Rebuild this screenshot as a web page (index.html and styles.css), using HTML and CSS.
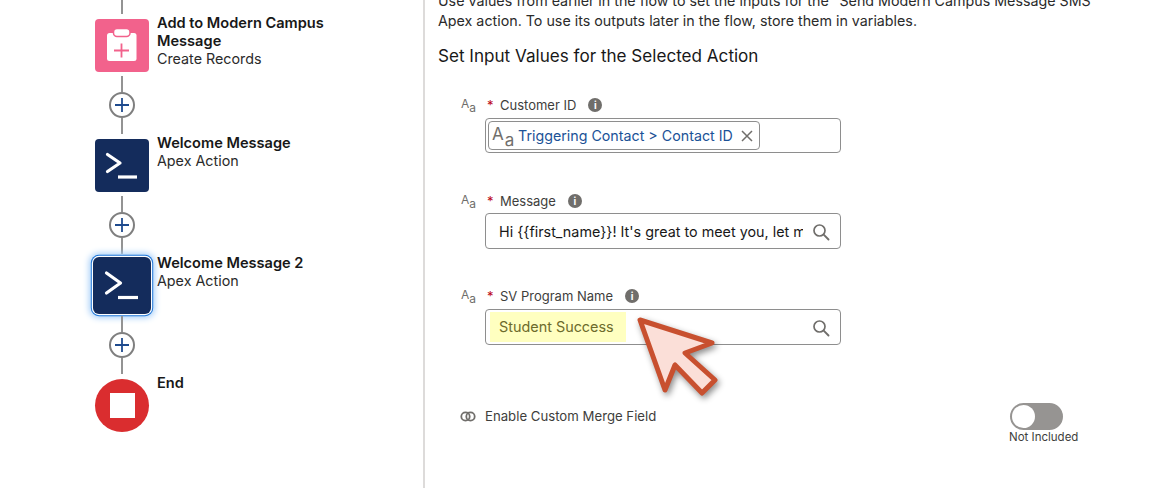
FILE: index.html
```html
<!DOCTYPE html>
<html lang="en">
<head>
<meta charset="utf-8">
<title>Flow Builder</title>
<link rel="stylesheet" href="styles.css">
</head>
<body>
<div class="app">
  <section class="canvas">
    <div class="flow">
      <div class="line line-top"></div>
      <div class="node">
        <div class="icon pink">
          <svg width="54" height="54" viewBox="0 0 54 54"><rect x="12" y="14" width="29.500" height="28" rx="2.500" fill="#fff"/><rect x="18.500" y="9.500" width="16.500" height="8" rx="3.500" fill="#fff" stroke="#f2628c" stroke-width="1.500"/><path stroke="#f2628c" stroke-width="1.800" fill="none" d="M26.500 24.500v14M19 31.500h15"/></svg>
        </div>
        <div class="info"><b>Add to Modern Campus Message</b><span>Create Records</span></div>
      </div>
      <div class="connector">
        <div class="line"></div>
        <div class="plus"><svg width="14" height="14" viewBox="0 0 14 14"><path stroke="#1f4b8e" stroke-width="1.800" d="M7 0v14M0 7h14"/></svg></div>
        <div class="line"></div>
      </div>
      <div class="node">
        <div class="icon navy">
          <svg width="54" height="54" viewBox="0 0 54 54"><path fill="none" stroke="#fff" stroke-width="3.200" stroke-linecap="round" stroke-linejoin="round" d="M12.500 15.500 L25 24 L12.500 32.500"/><path stroke="#fff" stroke-width="3.200" d="M23 38h19"/></svg>
        </div>
        <div class="info"><b>Welcome Message</b><span>Apex Action</span></div>
      </div>
      <div class="connector">
        <div class="line"></div>
        <div class="plus"><svg width="14" height="14" viewBox="0 0 14 14"><path stroke="#1f4b8e" stroke-width="1.800" d="M7 0v14M0 7h14"/></svg></div>
        <div class="line"></div>
      </div>
      <div class="node">
        <div class="icon navy selected">
          <svg width="54" height="54" viewBox="0 0 54 54"><path fill="none" stroke="#fff" stroke-width="3.200" stroke-linecap="round" stroke-linejoin="round" d="M11.500 14 L25.500 24 L11.500 34"/><path stroke="#fff" stroke-width="3.200" d="M23 38.500h20"/></svg>
        </div>
        <div class="info"><b>Welcome Message 2</b><span>Apex Action</span></div>
      </div>
      <div class="connector">
        <div class="line"></div>
        <div class="plus"><svg width="14" height="14" viewBox="0 0 14 14"><path stroke="#1f4b8e" stroke-width="1.800" d="M7 0v14M0 7h14"/></svg></div>
        <div class="line"></div>
      </div>
      <div class="node">
        <div class="icon red"><div class="stop"></div></div>
        <div class="info"><b>End</b></div>
      </div>
    </div>
  </section>

  <main class="panel">
    <p class="intro">Use values from earlier in the flow to set the inputs for the "Send Modern Campus Message SMS"<br>Apex action. To use its outputs later in the flow, store them in variables.</p>
    <h2 class="heading">Set Input Values for the Selected Action</h2>

    <div class="field field-customer">
      <div class="type">A<sub>a</sub></div>
      <div class="control">
        <div class="label"><em>*</em>Customer ID<i class="info-dot">i</i></div>
        <div class="input">
          <div class="pill"><span class="pill-type">A<sub>a</sub></span><span class="pill-text">Triggering Contact &gt; Contact ID</span>
            <svg width="12" height="12" viewBox="0 0 12 12"><path stroke="#706e6b" stroke-width="1.500" d="M1 1l10 10M11 1L1 11"/></svg>
          </div>
        </div>
      </div>
    </div>

    <div class="field field-message">
      <div class="type">A<sub>a</sub></div>
      <div class="control">
        <div class="label"><em>*</em>Message<i class="info-dot">i</i></div>
        <div class="input search">
          <span class="value">Hi {{first_name}}! It's great to meet you, let me know</span>
          <svg class="glass" width="18" height="18" viewBox="0 0 18 18"><circle cx="7.500" cy="7.500" r="5.500" fill="none" stroke="#706e6b" stroke-width="1.700"/><path stroke="#706e6b" stroke-width="1.900" stroke-linecap="round" d="M11.700 11.700l4.800 4.800"/></svg>
        </div>
      </div>
    </div>

    <div class="field field-program">
      <div class="type">A<sub>a</sub></div>
      <div class="control">
        <div class="label"><em>*</em>SV Program Name<i class="info-dot">i</i></div>
        <div class="input search highlight-input">
          <span class="highlight">Student Success</span>
          <svg class="glass" width="18" height="18" viewBox="0 0 18 18"><circle cx="7.500" cy="7.500" r="5.500" fill="none" stroke="#706e6b" stroke-width="1.700"/><path stroke="#706e6b" stroke-width="1.900" stroke-linecap="round" d="M11.700 11.700l4.800 4.800"/></svg>
        </div>
      </div>
    </div>

    <div class="merge">
      <svg width="16" height="11" viewBox="0 0 16 11"><circle cx="5.500" cy="5.500" r="4.200" fill="none" stroke="#706e6b" stroke-width="1.800"/><circle cx="10.500" cy="5.500" r="4.200" fill="none" stroke="#706e6b" stroke-width="1.800"/></svg>
      <span class="merge-label">Enable Custom Merge Field</span>
      <div class="toggle-box">
        <div class="toggle"><div class="knob"></div></div>
        <span>Not Included</span>
      </div>
    </div>
  </main>
</div>

<svg class="cursor" width="100" height="100" viewBox="0 0 100 100">
  <path fill="#fbdfd8" stroke="#c8502f" stroke-width="5" stroke-linejoin="round" d="M12 12 L84 35 L57 45 L87 72 L74 85 L47 57 L37 82 Z"/>
</svg>
</body>
</html>
```

FILE: styles.css
```css
* { box-sizing: border-box; }
html, body { margin: 0; padding: 0; height: 100%; overflow: hidden; background: #fff; }
body { font-family: Inter, "Noto Sans", "Liberation Sans", sans-serif; color: #181818; }

.app { display: flex; height: 488px; }

.canvas { width: 425px; flex: none; border-right: 2px solid #dddbda; padding-left: 95px; }
.flow { display: flex; flex-direction: column; }

.line { width: 2px; height: 16px; background: #939393; margin-left: 26px; }
.line-top { height: 14px; margin-bottom: 5px; }

.node { display: flex; gap: 8px; height: 53px; }
.icon { width: 54px; height: 53px; flex: none; border-radius: 4px; display: flex; align-items: center; justify-content: center; }
.pink { background: #f2628c; }
.navy { background: #142c5c; }
.selected { box-shadow: 0 0 0 2px #142c5c, 0 0 0 3.200px #fff, 0 0 0 4.200px #1b74d8, 0 0 6px 6px #a9d0f8; }
.red { background: #da2d2f; border-radius: 50%; }
.stop { width: 25px; height: 25px; background: #fff; }

.info { display: flex; flex-direction: column; font-size: 14.300px; line-height: 18px; margin-top: -4.600px; width: 190px; }
.info b { font-weight: 600; font-size: 14.600px; }
.info span { font-weight: 400; color: #2b2b2b; }

.connector { display: flex; flex-direction: column; height: 67px; padding-top: 4px; }
.plus { width: 26px; height: 26px; margin-left: 14px; border: 2px solid #7f7f7f; border-radius: 50%; background: #fff; display: flex; align-items: center; justify-content: center; }
.plus svg { width: 14px; height: 14px; }
.connector .line { height: 16px; margin-left: 26px; }

.panel { flex: 1; padding-left: 13px; position: relative; }
.intro { margin: -9px 0 0; font-size: 14.270px; line-height: 20px; color: #2b2b2b; white-space: nowrap; }
.heading { margin: 14px 0 0; font-size: 17.100px; line-height: 22px; font-weight: 400; color: #181818; }

.field { display: flex; margin-left: 23px; }
.type { width: 24px; flex: none; font-size: 12px; line-height: 14px; color: #706e6b; padding-top: 1px; font-weight: 400; }
.type sub { font-size: 12px; line-height: 0; vertical-align: -4px; }
.control { width: 356px; }
.label { display: flex; align-items: center; height: 18px; font-size: 13px; color: #3e3e3c; }
.label em { color: #ba0517; font-style: normal; margin: 0 6.500px 0 2px; }
.info-dot { width: 14px; height: 14px; border-radius: 50%; background: #706e6b; color: #fff; font-size: 10px; font-weight: 700; font-style: normal; display: flex; align-items: center; justify-content: center; margin-left: 12px; }

.field-customer { margin-top: 29px; }
.field-message { margin-top: 39px; }
.field-program { margin-top: 38px; }
.field-message .input { margin-top: 3px; }

.input { height: 36px; border: 1px solid #8e8e8e; border-radius: 4px; margin-top: 4px; background: #fff; display: flex; align-items: center; position: relative; }
.field-customer .input { height: 35px; padding-left: 2px; }
.pill { display: flex; align-items: center; width: 272px; height: 29px; border: 1px solid #8e8e8e; border-radius: 4px; padding: 0 6px 0 3px; }
.pill-type { font-size: 17px; line-height: 20px; color: #706e6b; width: 26px; flex: none; font-weight: 400; margin-top: -3px; }
.pill-type sub { font-size: 17px; line-height: 0; vertical-align: -6px; margin-left: 1px; }
.pill-text { flex: 1; font-size: 14.250px; color: #1b5297; white-space: nowrap; }

.search { padding: 0 37px 0 13px; }
.value { font-size: 14.350px; white-space: nowrap; overflow: hidden; color: #181818; flex: 1; }
.glass { position: absolute; right: 10px; top: 9px; }
.highlight-input { padding-left: 4px; }
.highlight { display: block; width: 136px; height: 30px; line-height: 30px; padding-left: 9px; background: #ffffc0; color: #6d6b2c; font-size: 14.400px; white-space: nowrap; }

.merge { display: flex; align-items: flex-start; margin: 56px 0 0 22px; position: relative; height: 44px; }
.merge svg { margin-top: 10px; flex: none; }
.merge-label { font-size: 13.200px; line-height: 18px; color: #3e3e3c; margin: 6px 0 0 9px; }
.toggle-box { position: absolute; left: 549px; top: 2px; display: flex; flex-direction: column; align-items: flex-start; }
.toggle { width: 53px; height: 27px; margin-left: 1px; border-radius: 14px; background: #969492; padding: 2px; }
.knob { width: 23px; height: 23px; border-radius: 50%; background: #fff; }
.toggle-box span { font-size: 11.500px; line-height: 14px; color: #3e3e3c; white-space: nowrap; }

.cursor { position: absolute; left: 628px; top: 308px; filter: drop-shadow(2px 3px 3px rgba(0,0,0,.45)); }
```
